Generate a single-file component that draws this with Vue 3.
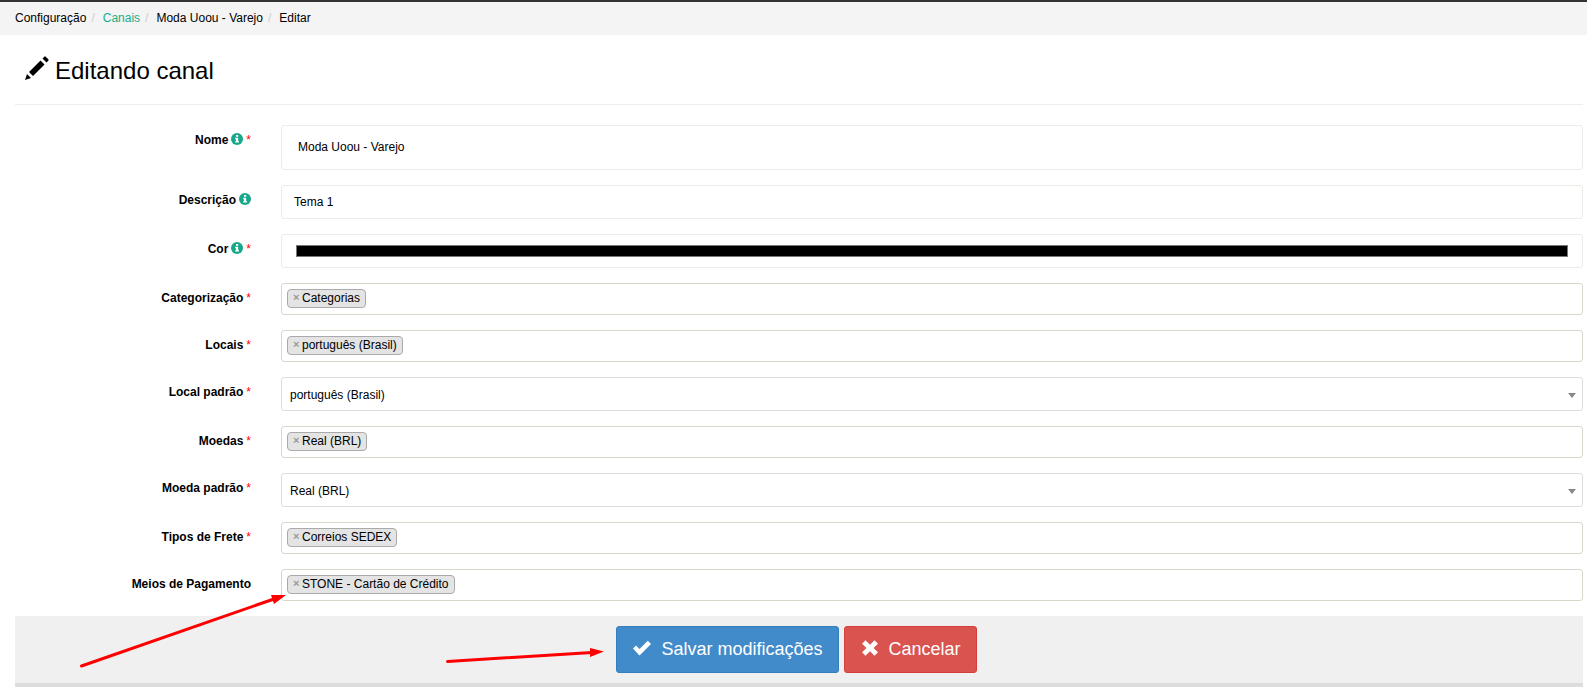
<script setup>
import { reactive } from 'vue'

const crumbs = [
  { text: 'Configuração' },
  { text: 'Canais', link: true },
  { text: 'Moda Uoou - Varejo' },
  { text: 'Editar' },
]

const fields = reactive([
  { id: 'nome', label: 'Nome', kind: 'text', value: 'Moda Uoou - Varejo', info: true, required: true, tall: true },
  { id: 'descricao', label: 'Descrição', kind: 'text', value: 'Tema 1', info: true },
  { id: 'cor', label: 'Cor', kind: 'color', value: '#000000', info: true, required: true },
  { id: 'categorizacao', label: 'Categorização', kind: 'tags', value: ['Categorias'], required: true },
  { id: 'locais', label: 'Locais', kind: 'tags', value: ['português (Brasil)'], required: true },
  { id: 'local-padrao', label: 'Local padrão', kind: 'select', value: 'português (Brasil)', required: true },
  { id: 'moedas', label: 'Moedas', kind: 'tags', value: ['Real (BRL)'], required: true },
  { id: 'moeda-padrao', label: 'Moeda padrão', kind: 'select', value: 'Real (BRL)', required: true },
  { id: 'frete', label: 'Tipos de Frete', kind: 'tags', value: ['Correios SEDEX'], required: true },
  { id: 'pagamento', label: 'Meios de Pagamento', kind: 'tags', value: ['STONE - Cartão de Crédito'] },
])
</script>

<template>
  <div class="page">
    <nav class="breadcrumb">
      <ol>
        <li v-for="c in crumbs" :key="c.text">
          <a v-if="c.link" href="#">{{ c.text }}</a>
          <span v-else>{{ c.text }}</span>
        </li>
      </ol>
    </nav>

    <main class="content">
      <header class="heading">
        <svg class="pencil" viewBox="0 0 24 24" aria-hidden="true">
          <path d="M0 24 2 18 6 22ZM4 16 15.500 4.500 19.500 8.500 8 20ZM17.500 2.500 19.300.7Q20 0 20.700.7L23.300 3.300Q24 4 23.300 4.700L21.500 6.500Z" />
        </svg>
        <h1>Editando canal</h1>
      </header>

      <form @submit.prevent>
        <div v-for="f in fields" :key="f.id" class="row">
          <label :for="f.id">
            {{ f.label }}
            <svg v-if="f.info" class="info" viewBox="0 0 12 12" aria-hidden="true">
              <circle cx="6" cy="6" r="6" />
              <path d="M5 2h2.200v1.800H5ZM4.200 4.800h3v3.400H8v1.400H4.200V8.200H5V6.200h-.8Z" />
            </svg>
            <span v-if="f.required" class="star">*</span>
          </label>

          <input v-if="f.kind === 'text'" :id="f.id" v-model="f.value" type="text" class="control" :class="{ tall: f.tall }" />
          <input v-else-if="f.kind === 'color'" :id="f.id" v-model="f.value" type="color" class="control color" />
          <div v-else-if="f.kind === 'select'" class="select">
            <select :id="f.id" v-model="f.value">
              <option>{{ f.value }}</option>
            </select>
          </div>
          <div v-else class="tags">
            <span v-for="(t, i) in f.value" :key="t" class="tag">
              <button type="button" :aria-label="'Remover ' + t" @click="f.value.splice(i, 1)">×</button>{{ t }}
            </span>
            <input :id="f.id" type="text" />
          </div>
        </div>

        <footer class="actions">
          <button type="submit" class="btn save">
            <svg viewBox="0 0 20 16" aria-hidden="true"><path d="M1 8.500 4 5.500 7.500 9 15.800.7 19 3.900 7.500 15.400Z" /></svg>
            Salvar modificações
          </button>
          <button type="button" class="btn cancel">
            <svg viewBox="0 0 20 16" aria-hidden="true"><path d="M5.500.3 10 4.800 14.500.3 18 3.800 13.500 8 18 12.200 14.500 15.700 10 11.200 5.500 15.700 2 12.200 6.500 8 2 3.800Z" /></svg>
            Cancelar
          </button>
        </footer>
      </form>
    </main>

    <svg class="arrows" width="620" height="687" viewBox="0 0 620 687" aria-hidden="true">
      <path class="line" d="M81.500 666 274 599M447.500 661.500 592 652.500" />
      <path d="M286 595 271 595 274 604ZM604 651.500 590 648 590 657Z" />
    </svg>
  </div>
</template>

<style>
body {
  background: #fff;
}
</style>

<style scoped>
.page,
.page * {
  box-sizing: border-box;
}
.page {
  position: relative;
  font: 12px/17px "Liberation Sans", Arial, sans-serif;
  color: #000;
}
.breadcrumb {
  border-top: 2px solid #333;
  background: #f4f4f4;
  padding: 8px 15px;
}
ol {
  display: flex;
  list-style: none;
  margin: 0;
  padding: 0;
}
li + li::before {
  content: "/";
  color: #ccc;
  padding: 0 8px 0 5px;
}
a {
  color: #1aae88;
  text-decoration: none;
}
.content {
  padding: 0 4px 0 15px;
}
.heading {
  display: flex;
  gap: 6px;
  padding: 21px 0 18px 10px;
  margin-bottom: 20px;
  border-bottom: 1px solid #eee;
}
.pencil {
  width: 24px;
  height: 24px;
}
h1 {
  margin: 0;
  font-size: 24px;
  font-weight: 400;
  line-height: 30px;
}
.row {
  display: grid;
  grid-template-columns: 236px 1fr;
  column-gap: 30px;
  align-items: start;
  margin-bottom: 15px;
}
label {
  display: flex;
  justify-content: flex-end;
  gap: 3px;
  padding-top: 7px;
  font-weight: 700;
}
.info {
  width: 12px;
  height: 12px;
  margin-top: 1px;
  fill: #17a88b;
}
.info path {
  fill: #fff;
}
.star {
  font-weight: 400;
  color: #f00;
}
.control,
select {
  display: block;
  width: 100%;
  height: 34px;
  margin: 0;
  padding: 6px 12px;
  border: 1px solid #edebe6;
  border-radius: 3px;
  background: #fff;
  color: #000;
  font: inherit;
}
.tall {
  height: 45px;
  padding: 6px 16px 7px;
}
.color {
  padding: 10px 14px;
  appearance: none;
}
.color::-webkit-color-swatch-wrapper {
  padding: 0;
}
.color::-webkit-color-swatch {
  border: 1px solid #777;
  border-radius: 0;
}
.select {
  position: relative;
}
.select::after {
  content: "";
  position: absolute;
  right: 7px;
  top: 16px;
  border: 4px solid transparent;
  border-top: 5px solid #888;
  border-bottom: 0;
}
select {
  appearance: none;
  padding: 2px 8px 0;
  border-color: #ddd;
}
.tags {
  display: flex;
  gap: 5px;
  height: 32px;
  padding: 5px;
  border: 1px solid #d9d7cb;
  border-radius: 3px;
}
.tags input {
  flex: 1;
  min-width: 0;
  height: 19px;
  padding: 0;
  border: 0;
  outline: 0;
  background: transparent;
  font: inherit;
}
.tag {
  display: flex;
  height: 19px;
  padding: 0 5px;
  border: 1px solid #aaa;
  border-radius: 4px;
  background: #e4e4e4;
  white-space: nowrap;
}
.tag button {
  display: flex;
  width: 7px;
  margin: 0 2px 0 0;
  padding: 0;
  border: 0;
  background: none;
  color: #999;
  font: bold 11px/15px "Liberation Sans", Arial, sans-serif;
}
.actions {
  display: flex;
  justify-content: center;
  gap: 5px;
  padding: 10px 5px 10px 0;
  background: #f0f0f0;
  border-bottom: 4px solid #ddd;
}
.btn {
  display: flex;
  align-items: center;
  gap: 9px;
  height: 47px;
  padding: 0 15px 2px;
  border: 1px solid #357ebd;
  border-radius: 3px;
  background: #428bca;
  color: #fff;
  font: 18px/24px "Liberation Sans", Arial, sans-serif;
}
.btn svg {
  width: 20px;
  height: 16px;
  margin-bottom: 2px;
  fill: #fff;
}
.cancel {
  border-color: #d43f3a;
  background: #d9534f;
}
.arrows {
  position: absolute;
  top: 0;
  left: 0;
  pointer-events: none;
  fill: #f00;
}
.line {
  fill: none;
  stroke: #f00;
  stroke-width: 3;
  stroke-linecap: round;
}
</style>
